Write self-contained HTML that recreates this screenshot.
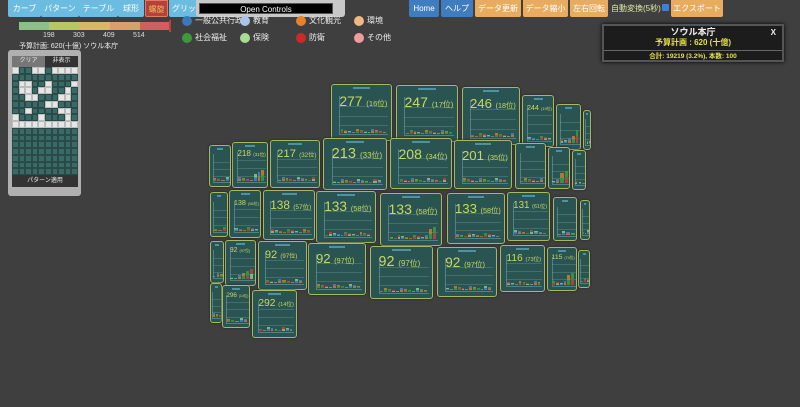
<!DOCTYPE html>
<html><head><meta charset="utf-8"><style>
*{margin:0;padding:0;box-sizing:border-box}
body{width:800px;height:407px;background:#3f3f3f;overflow:hidden;position:relative;font-family:"Liberation Sans","Noto Sans CJK JP",sans-serif}
.btn{position:absolute;top:0;height:17px;font-size:8px;line-height:17px;text-align:center;color:#fff;border-radius:0 0 2px 2px}
.b1{background:#6cbbe0}
.bh{background:#3f7dc0}
.bo{background:#e8ac60}
.card{position:absolute;background:#2a5452;border:1.5px solid #a8b862;border-radius:3px;overflow:hidden;box-shadow:0 0 2px #222}
.card .n{position:absolute;color:#c8d860;white-space:nowrap}
.card .n small{font-size:55%}
.card .ax{position:absolute;border-left:1px solid #7ab;border-bottom:1px solid #7ab;opacity:.5}
.card .gl{position:absolute;height:1px;background:#5a8a86;opacity:.5}
.card .bar{position:absolute;opacity:.85}
.card .t{position:absolute;height:2px;background:#6bd;opacity:.6}
.grid{position:absolute;left:12px;top:67px;display:grid;grid-template-columns:repeat(10,6.6px);grid-template-rows:repeat(16,6.75px)}
.grid div{border:0.5px solid #2a4a48;background:#3a6a67}
.grid div.w{background:#e6e6e6;border-color:#bbb}
</style></head><body>
<div class="btn b1" style="left:8px;width:33px">カーブ</div>
<div class="btn b1" style="left:41px;width:38px">パターン</div>
<div class="btn b1" style="left:79px;width:39px">テーブル</div>
<div class="btn b1" style="left:118px;width:26px">球形</div>
<div class="btn" style="left:145px;width:23px;background:#b8403a;color:#e8c060;border:1px solid #e07a60">螺旋</div>
<div class="btn b1" style="left:169px;width:30px">グリッ</div>
<div style="position:absolute;left:196px;top:0;width:149px;height:17px;background:#c8c8c8;border-radius:0 0 3px 3px"></div>
<div style="position:absolute;left:199px;top:3px;width:134px;height:11px;background:#000;color:#fff;font-size:8px;line-height:11px;text-align:center;border:1px solid #555">Open Controls</div>

<div style="position:absolute;left:19px;top:22px;height:8px;width:151px;display:flex">
<div style="flex:1;background:#8ebf8a"></div><div style="flex:1;background:#b6c860"></div><div style="flex:1;background:#d8b860"></div><div style="flex:1;background:#d8a070"></div><div style="flex:1;background:#d06060"></div></div>
<div style="position:absolute;left:169px;top:20px;width:2px;height:12px;background:#c03c3c"></div>
<div style="position:absolute;top:32px;left:43px;font-size:7px;color:#ddd">198</div>
<div style="position:absolute;top:32px;left:73px;font-size:7px;color:#ddd">303</div>
<div style="position:absolute;top:32px;left:103px;font-size:7px;color:#ddd">409</div>
<div style="position:absolute;top:32px;left:133px;font-size:7px;color:#ddd">514</div>
<div style="position:absolute;top:41px;left:19px;font-size:7px;color:#eee">予算計画: 620(十億) ソウル本庁</div>

<div id="leg"></div>

<div class="btn bh" style="left:409px;width:30px">Home</div>
<div class="btn bh" style="left:441px;width:32px">ヘルプ</div>
<div class="btn bo" style="left:475px;width:46px">データ更新</div>
<div class="btn bo" style="left:523px;width:45px">データ縮小</div>
<div class="btn bo" style="left:570px;width:38px">左右回転</div>
<div style="position:absolute;left:611px;top:3px;font-size:8px;color:#dfe8a0">自動変換(5秒)</div>
<div style="position:absolute;left:662px;top:4px;width:7px;height:7px;background:#3b82e0;border-radius:1px"></div>
<div class="btn bo" style="left:671px;width:52px">エクスポート</div>

<div style="position:absolute;left:602px;top:24px;width:182px;height:38px;background:#1c1c1c;border:2px solid #555;box-shadow:0 0 4px #000">
<div style="text-align:center;color:#eee;font-size:9px;font-weight:bold;line-height:11px;margin-top:1px">ソウル本庁</div>
<div style="position:absolute;right:6px;top:2px;color:#eee;font-size:8px;font-weight:bold">X</div>
<div style="text-align:center;color:#e6e04c;font-size:8px;font-weight:bold;line-height:10px">予算計画 : 620 (十億)</div>
<div style="border-top:1px solid #666;margin-top:2px;text-align:center;color:#e6e04c;font-size:6.5px;font-weight:bold;line-height:11px">合計: 19219 (3.2%), 本数: 100</div>
</div>

<div style="position:absolute;left:8px;top:50px;width:73px;height:146px;background:#b0b0b0;border-radius:3px"></div>
<div style="position:absolute;left:12px;top:56px;width:33px;height:11px;background:#777;color:#eee;font-size:6px;line-height:11px;text-align:center">クリア</div>
<div style="position:absolute;left:45px;top:56px;width:33px;height:11px;background:#333;color:#eee;font-size:6px;line-height:11px;text-align:center">非表示</div>
<div class="grid" id="grid"></div>
<div style="position:absolute;left:12px;top:175px;width:66px;height:12px;background:#333;color:#eee;font-size:6px;line-height:12px;text-align:center">パターン適用</div>

<div id="cards"></div>
<script>
var leg=[[182,21,"#3a78b8","一般公共行政"],[240,21,"#a8c4e8","教育"],[296,21,"#e8802c","文化観光"],[354,21,"#f0b884","環境"],[182,38,"#3c9a3c","社会福祉"],[240,38,"#a8dc90","保険"],[296,38,"#d02828","防衛"],[354,38,"#f09c9c","その他"]];
var h="";leg.forEach(function(l){h+='<div style="position:absolute;left:'+l[0]+'px;top:'+(l[1]-5)+'px;width:10px;height:10px;border-radius:50%;background:'+l[2]+'"></div><div style="position:absolute;left:'+(l[0]+13)+'px;top:'+(l[1]-6)+'px;font-size:8px;color:#eee">'+l[3]+'</div>'});
document.getElementById("leg").innerHTML=h;
var pat=["1001101111","0000000000","0110010001","0110110010","0011000110","0000011000","0010000110","1000100010","1111111111"];
var g="";for(var r=0;r<16;r++)for(var c=0;c<10;c++){var w=r<pat.length&&pat[r][c]=="1";g+='<div class="'+(w?"w":"")+'"></div>'}
document.getElementById("grid").innerHTML=g;
var cards=[
[583,110,8,40,""],[556,104,25,46,""],[522,95,32,52,"244 (19位)"],[462,87,58,58,"246 (18位)"],[396,85,62,57,"247 (17位)"],[331,84,61,57,"277 (16位)"],
[572,150,14,40,""],[548,147,22,42,""],[515,143,31,46,""],[454,140,58,49,"201 (35位)"],[390,138,62,51,"208 (34位)"],[323,138,64,52,"213 (33位)"],[270,140,50,48,"217 (32位)"],[232,142,36,46,"218 (31位)"],[209,145,22,42,""],
[580,200,10,40,""],[553,197,24,44,""],[507,192,43,49,"131 (61位)"],[447,193,58,51,"133 (58位)"],[380,193,62,53,"133 (58位)"],[316,191,60,52,"133 (58位)"],[263,190,52,50,"138 (57位)"],[229,190,32,48,"138 (56位)"],[210,192,18,45,""],
[578,250,12,38,""],[547,247,30,44,"115 (74位)"],[500,245,45,47,"116 (73位)"],[437,247,60,50,"92 (97位)"],[370,246,63,53,"92 (97位)"],[308,243,58,52,"92 (97位)"],[258,241,49,49,"92 (97位)"],[225,240,31,46,"92 (97位)"],[210,241,14,42,""],
[210,283,12,40,""],[222,285,28,43,"296 (14位)"],[252,290,45,48,"292 (14位)"]];
var cols=["#3c9a3c","#c04040","#8cc880","#4a80c0","#d07a30"];
var s="";cards.forEach(function(k,i){
var x=k[0],y=k[1],w=k[2],hh=k[3];var fs=Math.max(6,Math.min(15,w/4.4));
var c='<div class="card" style="left:'+x+'px;top:'+y+'px;width:'+w+'px;height:'+hh+'px">';
c+='<div class="t" style="left:35%;width:30%;top:2px"></div>';
for(var q=1;q<4;q++)c+='<div class="gl" style="left:'+(w*0.12)+'px;width:'+(w*0.8)+'px;top:'+(hh*(0.2+q*0.17))+'px"></div>';
if(k[4]){var p=k[4].split(" ");c+='<div class="n" style="left:'+(w*0.12)+'px;top:'+(hh*0.14)+'px;font-size:'+fs+'px">'+p[0]+' <small>'+p[1]+'</small></div>';}
c+='<div class="ax" style="left:'+(w*0.12)+'px;top:'+(hh*0.2)+'px;width:'+(w*0.8)+'px;height:'+(hh*0.68)+'px"></div>';
var nb=Math.max(3,Math.floor(w/5));for(var b=0;b<nb;b++){var bh=1+((b*7+i*3)%4)+(i%6==1&&b>nb-4?(b-nb+4)*3:0);
c+='<div class="bar" style="left:'+(w*0.14+b*(w*0.76/nb))+'px;bottom:'+(hh*0.12)+'px;width:'+(w*0.76/nb-1)+'px;height:'+bh+'px;background:linear-gradient('+cols[(b+i)%5]+' 50%,'+cols[(b+i+1)%5]+' 50%)"></div>';}
c+='</div>';s+=c;});
document.getElementById("cards").innerHTML=s;
</script>
</body></html>
